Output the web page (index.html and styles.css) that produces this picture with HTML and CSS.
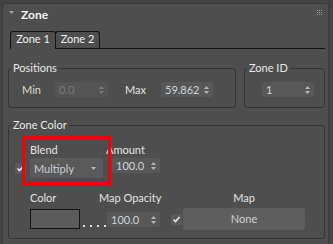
FILE: index.html
```html
<!DOCTYPE html>
<html lang="en">
<head>
    <meta charset="UTF-8">
    <title>Zone</title>
    <link rel="stylesheet" href="styles.css">
</head>
<body>
    <div class="rollout">
        <div class="rollout-head">
            <svg class="caret" width="5" height="3" viewBox="0 0 5 3"><polygon points="0,0 5,0 2.5,3" fill="#a3a3a3"/></svg>
            <span class="rollout-title">Zone</span>
            <svg class="grip" width="5" height="5" viewBox="0 0 5 5">
                <g fill="#9c9c9c">
                    <rect x="0" y="0" width="1" height="1"/><rect x="2" y="0" width="1" height="1"/><rect x="4" y="0" width="1" height="1"/>
                    <rect x="0" y="2" width="1" height="1"/><rect x="2" y="2" width="1" height="1"/><rect x="4" y="2" width="1" height="1"/>
                    <rect x="0" y="4" width="1" height="1"/><rect x="2" y="4" width="1" height="1"/><rect x="4" y="4" width="1" height="1"/>
                </g>
            </svg>
        </div>

        <div class="tabs">
            <div class="tab active">Zone 1</div>
            <div class="tab">Zone 2</div>
        </div>

        <div class="group-row">
            <fieldset class="group positions">
                <legend>Positions</legend>
                <div class="field-row pos-row">
                    <span class="lbl lbl-min">Min</span>
                    <div class="spinner disabled w-min">
                        <span class="val">0.0</span>
                        <svg class="arrows" width="5" height="8" viewBox="0 0 5 8"><polygon points="0,3 2.5,0 5,3"/><polygon points="0,5 5,5 2.5,8"/></svg>
                    </div>
                    <span class="lbl lbl-max">Max</span>
                    <div class="spinner w-max">
                        <span class="val">59.862</span>
                        <svg class="arrows" width="5" height="8" viewBox="0 0 5 8"><polygon points="0,3 2.5,0 5,3"/><polygon points="0,5 5,5 2.5,8"/></svg>
                    </div>
                </div>
            </fieldset>
            <fieldset class="group zone-id">
                <legend>Zone ID</legend>
                <div class="field-row id-row">
                    <div class="spinner w-id">
                        <span class="val">1</span>
                        <svg class="arrows" width="5" height="8" viewBox="0 0 5 8"><polygon points="0,3 2.5,0 5,3"/><polygon points="0,5 5,5 2.5,8"/></svg>
                    </div>
                </div>
            </fieldset>
        </div>

        <fieldset class="group zone-color">
            <legend>Zone Color</legend>
            <div class="blend-row">
                <span class="check check-blend">
                    <svg width="11" height="11" viewBox="0 0 11 11"><polyline points="2.5,5.5 4.5,7.5 8.5,3" fill="none" stroke="#e8e8e8" stroke-width="1.6"/></svg>
                </span>
                <div class="blend-col">
                    <div class="lbl">Blend</div>
                    <div class="dropdown">
                        <span>Multiply</span>
                        <svg width="5" height="3" viewBox="0 0 5 3"><polygon points="0,0 5,0 2.5,3" fill="#b4b4b4"/></svg>
                    </div>
                </div>
                <div class="amount-col">
                    <div class="lbl">Amount</div>
                    <div class="spinner w-amount">
                        <span class="val">100.0</span>
                        <svg class="arrows" width="5" height="8" viewBox="0 0 5 8"><polygon points="0,3 2.5,0 5,3"/><polygon points="0,5 5,5 2.5,8"/></svg>
                    </div>
                </div>
                <div class="highlight"></div>
            </div>

            <div class="label-row">
                <span class="lbl lbl-color">Color</span>
                <span class="lbl lbl-opacity">Map Opacity</span>
                <span class="lbl lbl-map">Map</span>
            </div>
            <div class="ctrl-row">
                <div class="swatch"></div>
                <span class="dots"></span>
                <div class="spinner w-opacity">
                    <span class="val">100.0</span>
                    <svg class="arrows" width="5" height="8" viewBox="0 0 5 8"><polygon points="0,3 2.5,0 5,3"/><polygon points="0,5 5,5 2.5,8"/></svg>
                </div>
                <span class="check check-map">
                    <svg width="11" height="11" viewBox="0 0 11 11"><polyline points="2.5,5.5 4.5,7.5 8.5,3" fill="none" stroke="#e8e8e8" stroke-width="1.6"/></svg>
                </span>
                <div class="map-button">None</div>
            </div>
        </fieldset>
    </div>
</body>
</html>
```

FILE: styles.css
```css
body {
    margin: 0;
    background-color: #444;
    font-family: Lato, "Liberation Sans", sans-serif;
    font-size: 11px;
    color: #e4e4e4;
}
.rollout {
    margin: 3px 4px 0 2px;
    height: 241px;
    box-sizing: border-box;
    background-color: #4e4e4e;
    border: 1px solid #3a3a3a;
    border-bottom: none;
    border-radius: 3px 3px 0 0;
    overflow: hidden;
}
.rollout-head {
    display: flex;
    align-items: center;
    height: 20px;
    padding: 0 6px;
}
.caret {
    align-self: flex-start;
    margin-top: 7px;
}
.rollout-title {
    margin-left: 7px;
    font-size: 12px;
    font-weight: 700;
    color: #f4f4f4;
}
.grip {
    align-self: flex-start;
    margin: 6px 0 0 auto;
}

/* tabs */
.tabs {
    display: flex;
    align-items: flex-start;
    margin: 7px 3px 0 7px;
    border-bottom: 1px solid #141414;
}
.tab {
    height: 17px;
    box-sizing: border-box;
    border: 1px solid #141414;
    border-bottom: none;
    border-radius: 3px 3px 0 0;
    line-height: 14px;
    text-align: center;
    color: #f0f0f0;
}
.tab:first-child {
    width: 46px;
}
.tab + .tab {
    width: 45px;
    margin-left: -1px;
}
.tab.active {
    height: 18px;
    margin-bottom: -1px;
    background-color: #4e4e4e;
}

/* group boxes */
.group {
    margin: 0;
    padding: 0;
    min-width: 0;
    border: 1px solid #353535;
    border-radius: 3px;
}
.group legend {
    margin-left: 2px;
    padding: 0 2px;
    line-height: 14px;
    color: #e8e8e8;
}
.group-row {
    display: flex;
    gap: 8px;
    margin: 12px 3px 0 5px;
}
.positions {
    width: 228px;
    box-sizing: border-box;
    padding: 7px 0 10px 0;
}
.zone-id {
    flex: 1;
    padding: 7px 0 10px 0;
}
.field-row {
    display: flex;
    align-items: center;
    height: 15px;
}
.pos-row {
    padding-left: 13px;
}
.id-row {
    padding-left: 17px;
}
.lbl {
    line-height: 14px;
    white-space: nowrap;
}
.lbl-min {
    width: 33px;
    color: #dfdcc6;
}
.lbl-max {
    width: 36px;
    margin-left: 17px;
}

/* spinners */
.spinner {
    display: flex;
    align-items: center;
    justify-content: space-between;
    height: 15px;
    box-sizing: border-box;
    padding: 0 4px 0 4px;
    background-color: #585858;
    border-radius: 2px;
    color: #ccd3dc;
    line-height: 15px;
}
.spinner .arrows {
    fill: #b4b4b4;
}
.spinner.disabled {
    background-color: #545454;
    color: #7a7a7a;
}
.spinner.disabled .arrows {
    fill: #7c7c7c;
}
.w-min { width: 53px; }
.w-max { width: 52px; }
.w-id { width: 52px; }
.w-amount { width: 48px; margin: 1px 0 0 6px; }
.w-opacity { width: 53px; margin-top: 4px; }

/* zone color */
.zone-color {
    margin: 10px 3px 0 5px;
    padding: 11px 0 8px 0;
}
.blend-row {
    position: relative;
    display: flex;
    align-items: flex-start;
    padding-left: 6px;
}
.check {
    display: block;
    width: 11px;
    height: 11px;
    background-color: #5a5a5a;
    border-radius: 1px;
}
.check svg {
    display: block;
}
.check-blend {
    margin-top: 20px;
}
.blend-col {
    width: 73px;
    margin-left: 4px;
}
.dropdown {
    display: flex;
    align-items: center;
    justify-content: space-between;
    height: 20px;
    margin-top: 1px;
    padding: 0 7px 0 4px;
    box-sizing: border-box;
    background-color: #5a5a5a;
    border-radius: 2px;
    color: #c9cdd6;
}
.amount-col {
    margin-left: 3px;
}
.highlight {
    position: absolute;
    left: 13px;
    top: -7px;
    width: 89px;
    height: 49px;
    box-sizing: border-box;
    border: 3px solid #f40000;
}
.label-row {
    display: flex;
    margin-top: 13px;
    padding-left: 21px;
}
.lbl-color { width: 69px; }
.lbl-opacity { width: 84px; }
.lbl-map { width: 122px; text-align: center; }
.ctrl-row {
    display: flex;
    align-items: flex-start;
    margin-top: 3px;
    padding-left: 21px;
}
.swatch {
    width: 50px;
    height: 20px;
    margin-top: 1px;
    box-sizing: border-box;
    border: 1px solid #141414;
    background-color: #5b5b5b;
}
.dots {
    width: 24px;
    height: 2px;
    margin: 17px 0 0 3px;
    background: repeating-linear-gradient(90deg, #dcdcdc 0 2px, transparent 2px 7px);
}
.check-map {
    margin: 6px 0 0 11px;
}
.map-button {
    width: 122px;
    height: 22px;
    margin-left: 1px;
    background-color: #5f5f5f;
    border-radius: 3px;
    line-height: 22px;
    text-align: center;
    color: #d0d0d0;
}
```
